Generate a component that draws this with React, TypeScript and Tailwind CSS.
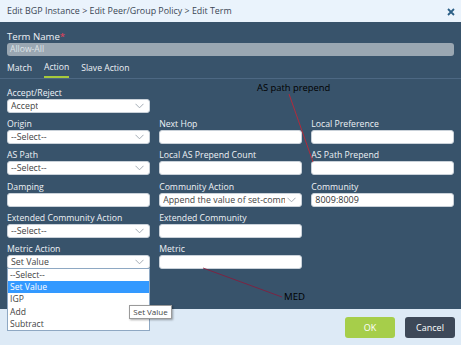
import React from "react";

const Chevron = () => (
  <svg width="9" height="6" viewBox="0 0 9 6" className="shrink-0">
    <path d="M0.5 0.8 L4.5 4.8 L8.5 0.8" fill="none" stroke="#9aa3ad" strokeWidth="0.9" />
  </svg>
);

const Label = ({ children }: { children: React.ReactNode }) => (
  <div className="h-[12px] leading-[12px] text-[8.7px] text-[#eef2f6] whitespace-nowrap">{children}</div>
);

const Input = ({ value }: { value?: string }) => (
  <div className="h-[14px] bg-white rounded-[3px] border border-[#c9d1d9] px-[3px] text-[9px] leading-[12px] text-[#333] flex items-center">
    {value}
  </div>
);

const Select = ({ value }: { value: string }) => (
  <div className="h-[14px] bg-white rounded-[3px] border border-[#c9d1d9] pl-[3px] pr-[5px] text-[8.8px] leading-[12px] text-[#444] flex items-center justify-between gap-[2px]">
    <span className="overflow-hidden whitespace-nowrap">{value}</span>
    <Chevron />
  </div>
);

const Field = ({ label, children }: { label?: string; children?: React.ReactNode }) => (
  <div className="flex flex-col">
    <Label>{label}</Label>
    {children}
  </div>
);

export default function App() {
  const options = ["--Select--", "Set Value", "IGP", "Add", "Subtract"];
  return (
    <div
      className="w-[461px] h-[345px] flex flex-col overflow-hidden relative"
      style={{ fontFamily: '"Open Sans", "Noto Sans", sans-serif' }}
    >
      <div className="h-[22px] shrink-0 bg-[#eaf3fc] flex items-center justify-between pl-[7px] pr-[6px] text-[8.9px] text-[#3a4654]">
        <span>Edit BGP Instance &gt; Edit Peer/Group Policy &gt; Edit Term</span>
        <svg width="8" height="8" viewBox="0 0 8 8" className="mt-[2px]">
          <path d="M1 1 L7 7 M7 1 L1 7" stroke="#2b5f86" strokeWidth="1.8" />
        </svg>
      </div>

      <div className="flex-1 bg-[#38536b] pt-[8px] flex flex-col">
        <div className="px-[7px]">
          <div className="h-[13px] leading-[13px] text-[9.6px] text-[#eef2f6]">
            Term Name<span className="text-[#e8405a]">*</span>
          </div>
          <div className="h-[13px] bg-[#9aa7b2] rounded-[3px] px-[3px] text-[8.6px] leading-[13px] text-[#dfe4e8]">
            Allow-All
          </div>
        </div>

        <div className="mt-[2px] flex px-[7px] gap-[12px] text-[8.6px] text-[#eef2f6] border-b border-[#4d6883]">
          <div className="h-[20px] flex items-center">Match</div>
          <div className="h-[20px] flex items-center border-b-2 border-[#a6c93c] -mb-[1px]">Action</div>
          <div className="h-[20px] flex items-center">Slave Action</div>
        </div>

        <div className="px-[7px] pt-[8px] grid grid-cols-3 gap-x-[9.5px] gap-y-[5.2px]">
          <Field label="Accept/Reject"><Select value="Accept" /></Field>
          <div />
          <div />
          <Field label="Origin"><Select value="--Select--" /></Field>
          <Field label="Next Hop"><Input /></Field>
          <Field label="Local Preference"><Input /></Field>
          <Field label="AS Path"><Select value="--Select--" /></Field>
          <Field label="Local AS Prepend Count"><Input /></Field>
          <Field label="AS Path Prepend"><Input /></Field>
          <Field label="Damping"><Input /></Field>
          <Field label="Community Action"><Select value="Append the value of set-community" /></Field>
          <Field label="Community"><Input value="8009:8009" /></Field>
          <Field label="Extended Community Action"><Select value="--Select--" /></Field>
          <Field label="Extended Community"><Input /></Field>
          <div />
          <Field label="Metric Action"><Select value="Set Value" /></Field>
          <Field label="Metric"><Input /></Field>
          <div />
        </div>
      </div>

      <div className="h-[36px] shrink-0 bg-[#ddeaf6] flex items-center justify-end gap-[10px] pr-[6px] pt-[1px]">
        <button className="w-[50px] h-[21px] rounded-[3px] bg-[#a6ce4a] text-white text-[9px]">OK</button>
        <button className="w-[50px] h-[21px] rounded-[3px] bg-[#3d4858] text-white text-[9px]">Cancel</button>
      </div>

      {/* open dropdown */}
      <div className="absolute left-[7px] top-[268px] w-[143px] bg-white border border-[#8ea8c3] flex flex-col">
        {options.map((o) => (
          <div
            key={o}
            className={
              "h-[12.2px] leading-[12px] px-[2px] text-[8.6px] " +
              (o === "Set Value" ? "bg-[#3399ff] text-white" : "text-[#444]")
            }
          >
            {o}
          </div>
        ))}
      </div>

      {/* tooltip */}
      <div className="absolute left-[129px] top-[305px] h-[14px] w-[43px] flex items-center justify-center bg-white border border-[#9a9a9a] shadow-[1px_1px_2px_rgba(0,0,0,0.35)] text-[8px] leading-[12px] text-[#444]">
        Set Value
      </div>

      {/* annotations */}
      <svg className="absolute left-0 top-0 pointer-events-none" width="461" height="345">
        <line x1="289" y1="94" x2="313" y2="162" stroke="#d0202e" strokeWidth="0.8" />
        <line x1="203" y1="268" x2="282" y2="297" stroke="#8b1838" strokeWidth="0.8" />
      </svg>
      <div className="absolute left-[257px] top-[81px] text-[9.4px] leading-[14px] text-black">AS path prepend</div>
      <div className="absolute left-[284px] top-[290px] text-[9.6px] leading-[14px] text-black">MED</div>
    </div>
  );
}
